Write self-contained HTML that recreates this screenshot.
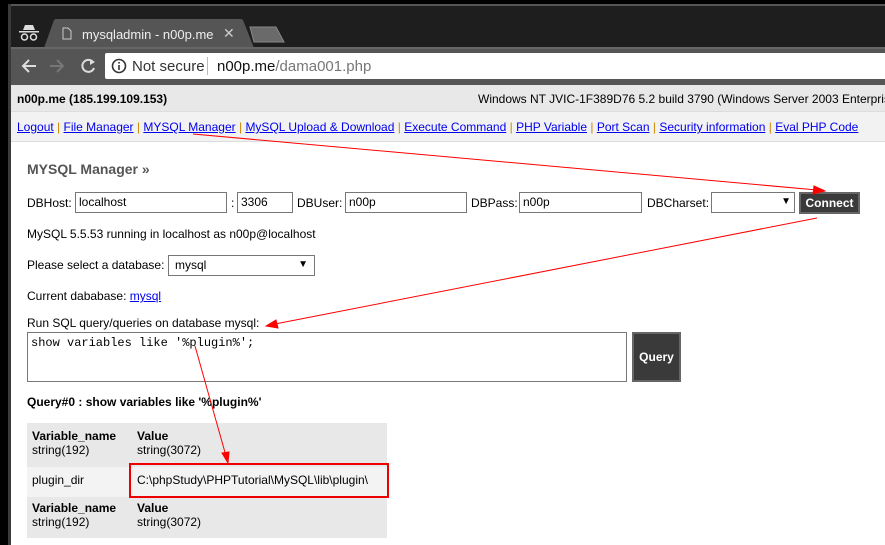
<!DOCTYPE html>
<html><head><meta charset="utf-8"><style>
*{margin:0;padding:0;box-sizing:border-box}
body{width:885px;height:545px;overflow:hidden;background:#000;font-family:"Liberation Sans",Arial,sans-serif;font-size:12px;position:relative}
.a{position:absolute}
.t{position:absolute;white-space:nowrap;color:#000;font-size:12px;line-height:14px}
.in{position:absolute;border:1px solid #777;background:#fff;font-size:12px;padding:2px 3px;line-height:14px}
a{color:#00e;text-decoration:underline}
.sep{color:#c80}
.btn{position:absolute;background:#3a3a3a;color:#fff;border:2px solid #666;font-size:12px;text-align:center}
</style></head><body>
<div class="a" style="left:10px;top:4px;width:875px;height:2px;background:#555"></div>
<div class="a" style="left:10px;top:6px;width:875px;height:41px;background:#1e1e1e"></div>
<div class="a" style="left:8px;top:4px;width:3px;height:541px;background:#3a3a3a"></div>
<svg class="a" style="left:18px;top:24px" width="22" height="18" viewBox="0 0 22 18"><path d="M5 6 L7 1 L15 1 L17 6 Z" fill="#ddd"/><rect x="1" y="7" width="20" height="1.5" fill="#ddd"/><circle cx="6.5" cy="13" r="3" fill="none" stroke="#ddd" stroke-width="1.5"/><circle cx="15.5" cy="13" r="3" fill="none" stroke="#ddd" stroke-width="1.5"/></svg>
<svg class="a" style="left:44px;top:19px" width="210" height="29"><path d="M0 29 L10 1 Q11 0 13 0 L196 0 Q198 0 199 1 L210 29 Z" fill="#555"/></svg>
<svg class="a" style="left:248px;top:26px" width="38" height="17"><path d="M2 1 L28 1 L36 16 L6 16 Z" fill="#6a6a6a" stroke="#888"/></svg>
<svg class="a" style="left:62px;top:27px" width="10" height="13"><path d="M1 1 H6 L9 4 V12 H1 Z" fill="none" stroke="#ccc"/></svg>
<div class="t" style="left:82px;top:27px;color:#eee;font-size:13px;line-height:15px">mysqladmin - n00p.me</div>
<div class="t" style="left:223px;top:26px;color:#ccc;font-size:14px">✕</div>
<div class="a" style="left:11px;top:47px;width:874px;height:38px;background:#555"></div>
<div class="a" style="left:11px;top:47px;width:874px;height:2px;background:#666"></div>
<svg class="a" style="left:20px;top:56px" width="80" height="20"><path d="M16 10 H4 M9 4 L3 10 L9 16" stroke="#ddd" stroke-width="2" fill="none"/><path d="M30 10 H42 M37 4 L43 10 L37 16" stroke="#777" stroke-width="2" fill="none"/><path d="M73 6 A6 6 0 1 0 74 12" stroke="#ddd" stroke-width="2" fill="none"/><path d="M70 3 L75 6 L70 9 Z" fill="#ddd"/></svg>
<div class="a" style="left:105px;top:53px;width:780px;height:26px;background:#fff;border-radius:2px 0 0 2px"></div>
<svg class="a" style="left:111px;top:58px" width="16" height="16"><circle cx="8" cy="8" r="6.5" fill="none" stroke="#333" stroke-width="1.6"/><rect x="7.2" y="7" width="1.6" height="5" fill="#333"/><rect x="7.2" y="4" width="1.6" height="1.6" fill="#333"/></svg>
<div class="t" style="left:132px;top:58px;font-size:15px;line-height:17px;color:#333">Not secure</div>
<div class="a" style="left:207px;top:57px;width:1px;height:18px;background:#bbb"></div>
<div class="t" style="left:217px;top:58px;font-size:15px;line-height:17px;color:#111">n00p.me<span style="color:#777">/dama001.php</span></div>
<div class="a" style="left:11px;top:85px;width:874px;height:460px;background:#fff"></div>
<div class="a" style="left:11px;top:85px;width:874px;height:27px;background:#e8e8e8;border-bottom:1px solid #ddd"></div>
<div class="t" style="left:17px;top:92px;font-weight:bold">n00p.me (185.199.109.153)</div>
<div class="t" style="left:478px;top:92px">Windows NT JVIC-1F389D76 5.2 build 3790 (Windows Server 2003 Enterprise</div>
<div class="a" style="left:11px;top:112px;width:874px;height:30px;background:#f2f2f2;border-bottom:1px solid #ddd"></div>
<div class="t" style="left:17px;top:120px"><a>Logout</a> <span class="sep">|</span> <a>File Manager</a> <span class="sep">|</span> <a>MYSQL Manager</a> <span class="sep">|</span> <a>MySQL Upload &amp; Download</a> <span class="sep">|</span> <a>Execute Command</a> <span class="sep">|</span> <a>PHP Variable</a> <span class="sep">|</span> <a>Port Scan</a> <span class="sep">|</span> <a>Security information</a> <span class="sep">|</span> <a>Eval PHP Code</a></div>
<div class="t" style="left:27px;top:161px;font-weight:bold;font-size:14px;line-height:16px;color:#555">MYSQL Manager »</div>
<div class="t" style="left:27px;top:196px">DBHost:</div>
<div class="in" style="left:75px;top:192px;width:152px;height:21px">localhost</div>
<div class="t" style="left:231px;top:196px">:</div>
<div class="in" style="left:237px;top:192px;width:56px;height:21px">3306</div>
<div class="t" style="left:297px;top:196px">DBUser:</div>
<div class="in" style="left:345px;top:192px;width:122px;height:21px">n00p</div>
<div class="t" style="left:471px;top:196px">DBPass:</div>
<div class="in" style="left:519px;top:192px;width:123px;height:21px">n00p</div>
<div class="t" style="left:647px;top:196px">DBCharset:</div>
<div class="in" style="left:711px;top:192px;width:84px;height:21px;text-align:right;font-size:10px">▼</div>
<div class="btn" style="left:799px;top:192px;width:61px;height:22px;line-height:18px;font-weight:bold">Connect</div>
<div class="t" style="left:27px;top:227px">MySQL 5.5.53 running in localhost as n00p@localhost</div>
<div class="t" style="left:27px;top:258px">Please select a database:</div>
<div class="in" style="left:168px;top:255px;width:147px;height:21px;padding-left:6px">mysql<span style="position:absolute;right:6px;font-size:10px">▼</span></div>
<div class="t" style="left:27px;top:289px">Current dababase: <a>mysql</a></div>
<div class="t" style="left:27px;top:316px">Run SQL query/queries on database mysql:</div>
<div class="in" style="left:27px;top:332px;width:600px;height:50px;font-family:'Liberation Mono',monospace;font-size:12px;padding:3px">show variables like '%plugin%';</div>
<div class="btn" style="left:632px;top:332px;width:49px;height:50px;line-height:46px;font-weight:bold">Query</div>
<div class="t" style="left:27px;top:395px;font-weight:bold">Query#0 : show variables like '%plugin%'</div>
<div class="a" style="left:27px;top:423px;width:360px;height:44px;background:#e8e8e8"></div>
<div class="a" style="left:27px;top:467px;width:360px;height:30px;background:#f3f3f3"></div>
<div class="a" style="left:27px;top:497px;width:360px;height:41px;background:#e8e8e8"></div>
<div class="t" style="left:32px;top:429px"><b>Variable_name</b><br>string(192)</div>
<div class="t" style="left:137px;top:429px"><b>Value</b><br>string(3072)</div>
<div class="t" style="left:32px;top:473px">plugin_dir</div>
<div class="t" style="left:137px;top:473px">C:\phpStudy\PHPTutorial\MySQL\lib\plugin\</div>
<div class="t" style="left:32px;top:501px"><b>Variable_name</b><br>string(192)</div>
<div class="t" style="left:137px;top:501px"><b>Value</b><br>string(3072)</div>
<div class="a" style="left:129px;top:463px;width:260px;height:35px;border:2px solid #e00"></div>
<svg class="a" style="left:0;top:0" width="885" height="545">
<g stroke="#f00" stroke-width="1" fill="#f00">
<line x1="193" y1="134" x2="817" y2="190"/><path d="M825 191 L814 186 L813 194 Z"/>
<line x1="817" y1="218" x2="275" y2="324"/><path d="M266 326 L276 320 L278 328 Z"/>
<line x1="195" y1="346" x2="226" y2="456"/><path d="M228 463 L222 453 L229 452 Z"/>
</g></svg>
</body></html>
